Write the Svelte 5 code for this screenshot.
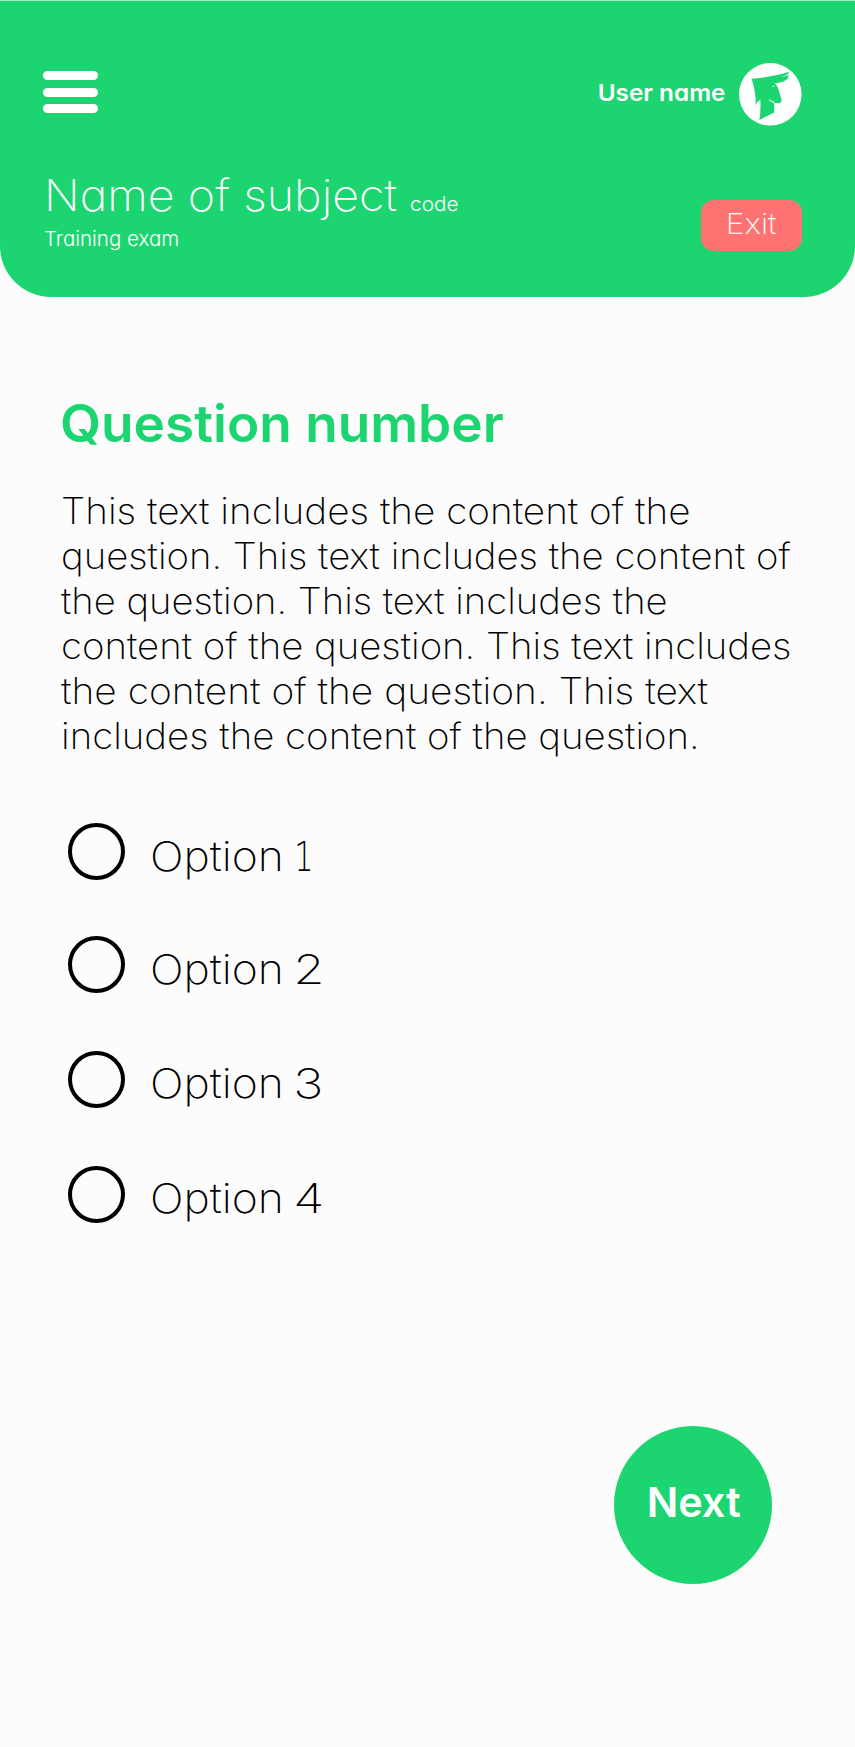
<script>
  const lines = [
    { text: 'This text includes the content of the', stretch: 1.075 },
    { text: 'question. This text includes the content of', stretch: 1.065 },
    { text: 'the question. This text includes the', stretch: 1.062 },
    { text: 'content of the question. This text includes', stretch: 1.066 },
    { text: 'the content of the question. This text', stretch: 1.081 },
    { text: 'includes the content of the question.', stretch: 1.067 }
  ];
  const options = ['1', '2', '3', '4'];
</script>

<div class="screen">
  <header>
    <div class="topbar">
      <button class="menu" aria-label="Menu"><i></i><i></i><i></i></button>
      <div class="user">
        <span class="username">User name</span>
        <svg class="avatar" viewBox="27 24 188 188" aria-hidden="true">
          <circle cx="121" cy="118" r="94" fill="#fff" />
          <path
            fill="#1cd571"
            d="M65 71 Q125 67 177 51 Q178 53 175 56 Q165 63 151 67 Q167 64 178 59 Q178 63 172 67 Q178 65 175 70 Q162 84 135 85 Q140 92 144 98 L154 131 Q157 141 149 145 Q136 145 127 141 L117 136 Q121 140 133 146 V173 L88 195 Q93 170 91 134 Q82 139 77 151 Q79 115 65 71 Z"
          />
          <path d="M127 95 l6 -2 M117 136 q5 -2 7 2 q4 3 8 1" fill="none" stroke="#fff" stroke-width="2.5" />
        </svg>
      </div>
    </div>
    <div class="subject">
      <div>
        <div class="titles">
          <h1>Name of subject</h1>
          <span class="code">code</span>
        </div>
        <p class="kind">Training exam</p>
      </div>
      <button class="exit"><span>Exit</span></button>
    </div>
  </header>

  <main>
    <h2>Question number</h2>
    <p class="question">
      {#each lines as line}
        <span style:transform="scaleX({line.stretch})">{line.text}</span>
      {/each}
    </p>
    <div class="options">
      {#each options as option}
        <div class="option">
          <span class="radio"></span>
          <span class="label">Option <b class:one={option === '1'}>{option}</b></span>
        </div>
      {/each}
    </div>
    <button class="next">Next</button>
  </main>
</div>

<style>
  :global(body) {
    background: #fcfcfc;
  }
  .screen {
    height: 1747px;
    overflow: hidden;
    box-sizing: border-box;
    font-family: Inter, 'Liberation Sans', sans-serif;
    font-weight: 200;
    font-feature-settings: 'cv11' 1;
    color: #000;
    white-space: nowrap;
  }
  h1, h2, p {
    margin: 0;
  }
  button {
    border: 0;
    padding: 0;
    font: inherit;
    font-feature-settings: inherit;
    color: #fff;
  }
  header {
    height: 296.6px;
    box-sizing: border-box;
    padding: 63px 53.3px 0 43px;
    border-top: 1px solid #a5ecc6;
    border-radius: 0 0 51px 51px;
    background: #1cd571;
    color: #fff;
  }
  .topbar {
    height: 62px;
    display: flex;
    justify-content: space-between;
    align-items: flex-start;
  }
  .menu {
    margin-top: 7px;
    width: 54.6px;
    display: grid;
    gap: 7.7px;
    background: none;
  }
  .menu i {
    height: 9px;
    border-radius: 5px;
    background: #fff;
  }
  .user {
    display: flex;
    align-items: center;
    gap: 14px;
  }
  .username {
    padding-bottom: 4px;
    font-size: 23.5px;
    font-weight: 600;
    transform: scaleX(1.035);
    transform-origin: right;
  }
  .avatar {
    display: block;
    width: 62.6px;
    height: 62.6px;
    margin-top: -1px;
  }
  .subject {
    display: flex;
    justify-content: space-between;
    margin-top: 42px;
  }
  .titles {
    display: flex;
    align-items: baseline;
    gap: 33px;
    padding: 1px 0 0 1px;
  }
  h1 {
    font-size: 44px;
    line-height: 52px;
    font-weight: 200;
    transform: scaleX(1.06);
    transform-origin: left;
  }
  .code {
    font-size: 20px;
    line-height: 24px;
    font-weight: 300;
    transform: scaleX(1.04);
    transform-origin: left;
  }
  .kind {
    margin-top: 5px;
    padding-left: 1px;
    font-size: 20.5px;
    line-height: 26px;
    font-weight: 300;
  }
  .exit {
    width: 100.4px;
    height: 50.7px;
    margin-top: 32px;
    padding-bottom: 4px;
    border-radius: 13px;
    background: #ff7272;
    font-size: 29px;
  }
  .exit span {
    display: inline-block;
    transform: scaleX(1.1);
  }
  main {
    display: flex;
    flex-direction: column;
    padding: 97.4px 0 0 60px;
  }
  h2 {
    font-size: 52px;
    line-height: 60px;
    font-weight: 600;
    color: #1cd571;
    transform: scaleX(1.022);
    transform-origin: left;
  }
  .question {
    margin: 34.9px 0 0 1px;
    font-size: 36px;
    line-height: 45px;
  }
  .question span {
    display: block;
    transform-origin: left;
  }
  .options {
    display: grid;
    gap: 57.9px;
    margin: 64.3px 0 0 8px;
  }
  .option {
    display: flex;
    align-items: center;
    gap: 24.6px;
    height: 57px;
  }
  .option:nth-child(2) {
    margin-top: -2px;
  }
  .radio {
    width: 57px;
    height: 57px;
    box-sizing: border-box;
    border: 4.4px solid #000;
    border-radius: 50%;
  }
  .label {
    padding-top: 8px;
    font-size: 41px;
    line-height: 50px;
    word-spacing: -3px;
    transform: scaleX(1.085);
    transform-origin: left;
  }
  .label b {
    display: inline-block;
    font-weight: 200;
    transform: scaleX(1.14);
    transform-origin: left;
  }
  .label .one {
    margin-left: 1px;
    font-family: 'DejaVu Sans', Inter, sans-serif;
    line-height: 1;
    transform: scaleX(0.68);
  }
  .next {
    width: 158.4px;
    height: 158.4px;
    margin: 202.7px 0 0 554px;
    padding: 0 0 5px 1px;
    border-radius: 50%;
    background: #1cd571;
    font-size: 41.5px;
    font-weight: 600;
  }
</style>
